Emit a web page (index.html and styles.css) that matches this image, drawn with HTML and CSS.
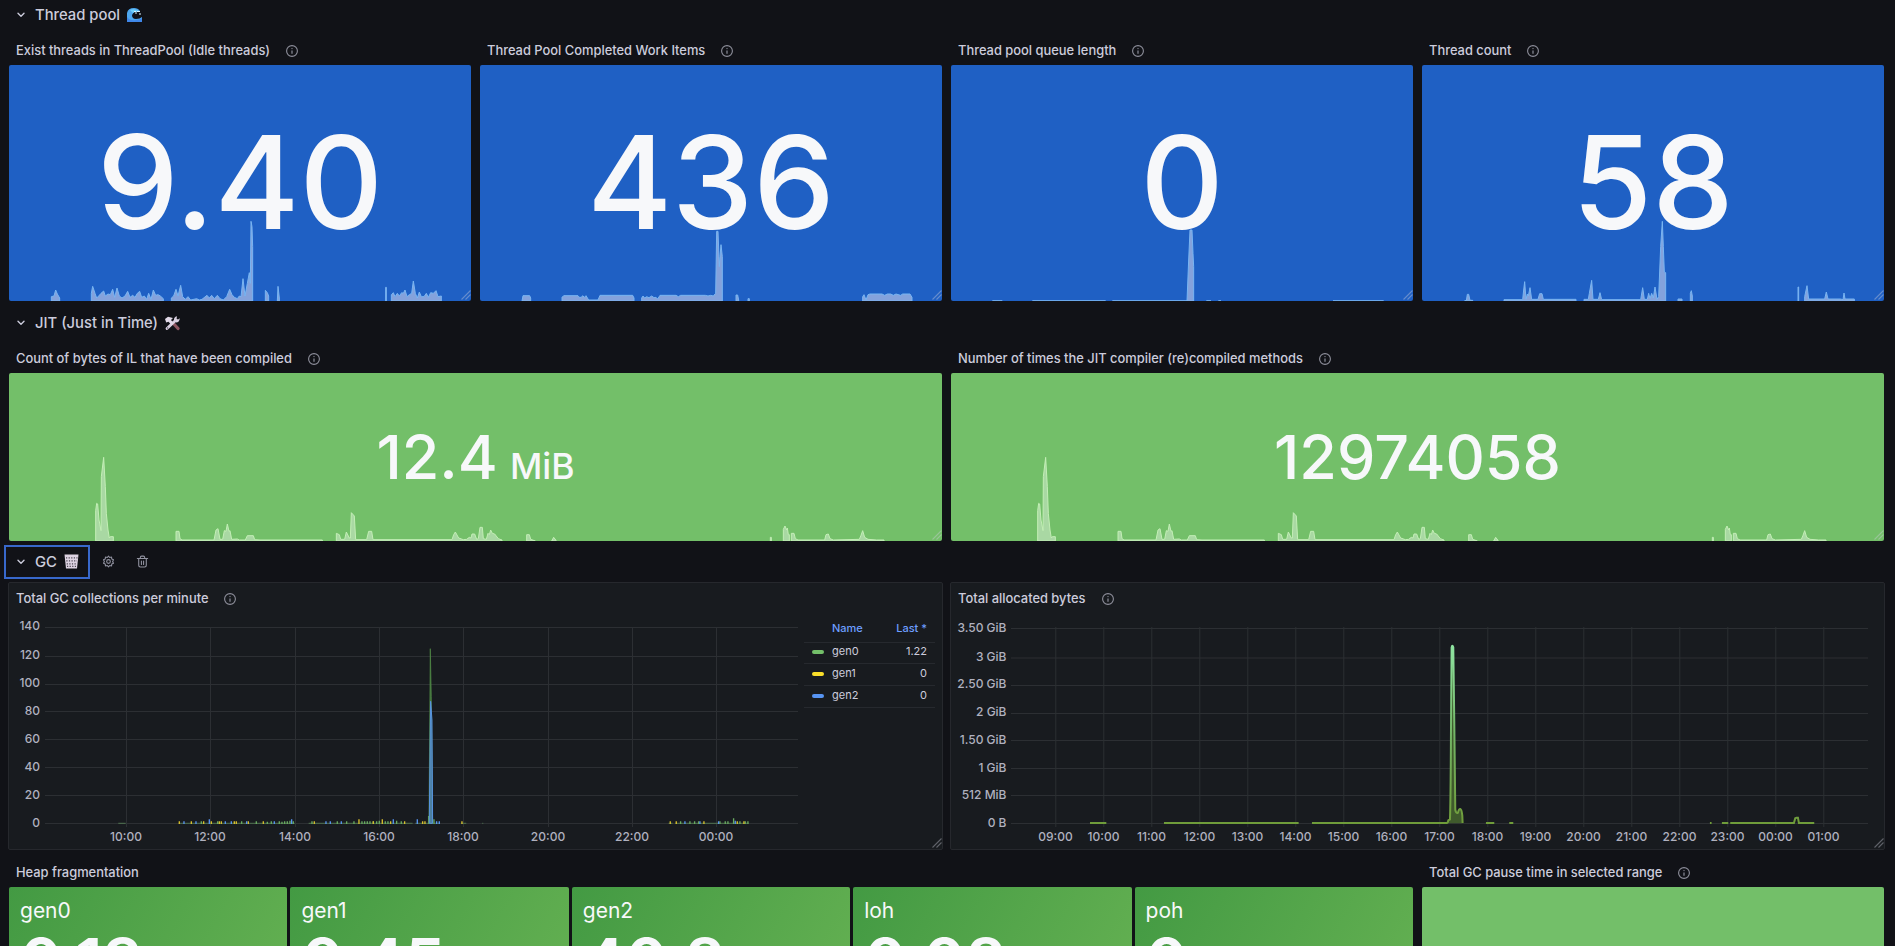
FILE: index.html
```html
<!DOCTYPE html>
<html lang="en">
<head>
    <meta charset="UTF-8">
    <meta name="viewport" content="width=device-width, initial-scale=1.0">
    <title>.NET runtime metrics</title>
    <link rel="stylesheet" href="styles.css">
</head>
<body>
    <!-- shared icons -->
    <svg class="defs" width="0" height="0">
        <symbol id="chevron" viewBox="0 0 8 6">
            <path d="M1 1.2 4 4.2 7 1.2" fill="none" stroke="currentColor" stroke-width="1.4" stroke-linecap="round" stroke-linejoin="round"/>
        </symbol>
        <symbol id="info" viewBox="0 0 12 12">
            <circle cx="6" cy="6" r="5.4" fill="none" stroke="currentColor" stroke-width="1.1"/>
            <path d="M6 5.4V8.7" stroke="currentColor" stroke-width="1.2"/>
            <circle cx="6" cy="3.6" r=".7" fill="currentColor"/>
        </symbol>
        <symbol id="resize" viewBox="0 0 10 10">
            <path d="M.5 9.5 9.5.5M4.5 9.5 9.5 4.5" stroke="currentColor" stroke-width="1.1"/>
        </symbol>
        <symbol id="jit-spark" viewBox="27 219 2799 504" preserveAspectRatio="none">
            <path d="M287 723V632L290 610 293 612 297 660 303 692 304 530 311 472 316 560 319 640 324 690 328 714 331 710 340 710V723Z
            M528 723V694H537L540 716 546 720H642L648 690 654 686 660 718H668L673 692 678 694 682 672 687 694 690 692 695 718 712 717 718 720H736L742 707H760L764 719 780 720H967V723Z
            M1009 723V700L1018 704 1022 718 1034 718 1039 696 1048 714 1051 714 1054 638 1063 648 1067 719H1100L1106 694H1115L1119 719H1356L1361 704 1366 696 1376 714 1390 719 1400 718 1408 712 1413 714 1416 702 1424 702 1430 718 1435 716 1440 682H1447L1450 716 1459 718 1464 700 1468 704 1472 690 1477 700 1484 702 1495 716 1506 720V723Z
            M1580 723V704H1588L1592 718 1606 723Z M1655 723 1661 712 1668 721V723Z M2311 723V712H2314V723Z
            M2350 723V688L2355 678 2360 690 2362 684 2365 704 2368 704V723Z M2374 723V700H2382L2386 716 2394 720H2474L2478 704 2485 702 2490 716 2500 720 2578 718 2583 706 2588 692 2594 712 2604 718 2630 720H2652V723Z"/>
        </symbol>
    </svg>

    <div class="dashboard">
        <div class="row-header">
            <div class="row-title">
                <svg class="chevron"><use href="#chevron"/></svg>
                <span>Thread pool</span>
                <svg class="emoji" viewBox="0 0 15 15">
                    <path d="M0 5Q1 0 7 0 11 0 13 3L10 4 7 4 5 7Q5 11 9 11 13 11 15 9V14H0Z" fill="#4ea7ee"/>
                    <path d="M0 9Q3 13 9 12 13 12 15 10V14H0Z" fill="#3f86e8"/>
                    <path d="M3 2Q7 0 12 3L8 4 6 5Z" fill="#6fd0fa"/>
                    <path d="M7 3.5H9M10 3.5H13M12 6H14M8 5H10" stroke="#d9f3ff" stroke-width="1.2"/>
                </svg>
            </div>
        </div>

        <div class="panels four">
            <div class="panel">
                <div class="panel-header">Exist threads in ThreadPool (Idle threads)<svg class="info"><use href="#info"/></svg></div>
                <div class="stat blue">
                    <svg class="spark" viewBox="27 195 1386 708" preserveAspectRatio="none">
                        <path d="M154 903V890L162 888 167 870 172 882 179 894V903Z
                        M274 903V880L278 859 285 880 290 894 296 888 303 880 311 873 316 888 324 882 331 884 338 868 344 892 351 864 358 888 366 894 375 888 383 874 390 892 398 886 405 892 412 880 419 874 425 892 433 888 440 898 446 880 453 898 460 870 467 886 474 884 481 888 490 896V903Z
                        M514 903V894L521 888 528 868 534 888 542 856 548 890 556 898 564 890 572 900 590 896 598 900 606 898 621 886 628 894 635 886 643 896 652 886 660 896 670 900 680 890 689 868 696 884 703 892 712 896 718 888 723 890 729 836 735 888 742 850 748 818 751 850 753 664 756 680 758 740V903Z
                        M796 903V871L802 878 806 888V903Z M832 903 834 859 838 894V903Z M1157 903V862H1159V903Z
                        M1174 903V884L1180 878 1185 890 1192 880 1198 888 1205 878 1210 880 1215 870 1221 890 1228 884 1235 880 1240 843 1246 880 1252 894 1258 876 1264 890 1272 890 1279 880 1285 892 1292 878 1300 880 1308 872 1314 890 1324 888V903Z"/>
                    </svg>
                    <span class="value">9.40</span>
                    <svg class="resize"><use href="#resize"/></svg>
                </div>
            </div>
            <div class="panel">
                <div class="panel-header">Thread Pool Completed Work Items<svg class="info"><use href="#info"/></svg></div>
                <div class="stat blue">
                    <svg class="spark" viewBox="30 195 1386 708" preserveAspectRatio="none">
                        <path d="M156 903 159 887H179L182 894V903Z
                        M276 903V892L281 887H324L328 892 334 892 338 887 343 892 348 887 356 900 384 900 390 886H488L492 894V903Z
                        M515 903V894L519 888 524 894 530 890 537 893 545 888 552 893 558 892 563 897 570 886H618L625 890 632 886H706L714 888 722 886 730 888 737 880 740 694 744 694 748 800 750 770 753 734 757 770V903Z
                        M798 903V885H803L806 900V903Z M834 903V896H838V903Z
                        M1178 903V890L1182 884 1188 900 1194 884 1200 882H1236L1244 886 1252 882 1262 882 1270 886 1278 882 1292 886 1298 882H1320L1326 892V903Z"/>
                    </svg>
                    <span class="value">436</span>
                    <svg class="resize"><use href="#resize"/></svg>
                </div>
            </div>
            <div class="panel">
                <div class="panel-header">Thread pool queue length<svg class="info"><use href="#info"/></svg></div>
                <div class="stat blue">
                    <svg class="spark" viewBox="32 195 1386 708" preserveAspectRatio="none">
                        <path d="M740 903 745 780 749 690H755L758 760 760 800V903Z"/>
                        <path d="M156 902H186M276 902H496M516 902H740M798 902H812M834 902H842M1178 902H1330"/>
                    </svg>
                    <span class="value">0</span>
                    <svg class="resize"><use href="#resize"/></svg>
                </div>
            </div>
            <div class="panel">
                <div class="panel-header">Thread count<svg class="info"><use href="#info"/></svg></div>
                <div class="stat blue">
                    <svg class="spark" viewBox="36 195 1386 708" preserveAspectRatio="none">
                        <path d="M164 902H169L172 883H176L180 901H188V903Z
                        M282 903V899H338L341 870 344 845 348 898 352 882 355 888 360 863 365 898 384 898 389 881H396L400 898H498V903Z
                        M522 903V898H535L538 880 545 841 549 898H565L570 878 575 899H692L698 863 703 898H712L716 880 720 896 725 880 730 894 735 861 741 898 746 890 752 740 757 664 760 740 763 816 767 818V903Z
                        M804 903V897H816V903Z M841 903V880L844 872 847 888V903Z M1164 903V861H1166V903Z
                        M1184 903V890L1191 857 1196 897H1244L1249 876 1254 897H1292L1299 899 1302 879 1305 897H1333V903Z"/>
                    </svg>
                    <span class="value">58</span>
                    <svg class="resize"><use href="#resize"/></svg>
                </div>
            </div>
        </div>

        <div class="row-header">
            <div class="row-title">
                <svg class="chevron"><use href="#chevron"/></svg>
                <span>JIT (Just in Time)</span>
                <svg class="emoji" viewBox="0 0 15 15">
                    <path d="M8 7 13 12.5" stroke="#8d5560" stroke-width="3.2" stroke-linecap="round"/>
                    <path d="M2 12.5 11 4" stroke="#d9cfe0" stroke-width="2.8" stroke-linecap="round"/>
                    <path d="M9 5Q8.5 .8 12 .3L11.5 3 13 3.5 14.8 2.3Q14.5 6.5 11 6.5Z" fill="#d9cfe0"/>
                    <path d="M0 3 3 .8 8 2 6 4 8.5 7 6.5 9 3.5 5.8 1.2 6.5Z" fill="#e2d9e8"/>
                    <circle cx="2.6" cy="12" r=".7" fill="#5b5363"/>
                </svg>
            </div>
        </div>

        <div class="panels two">
            <div class="panel">
                <div class="panel-header">Count of bytes of IL that have been compiled<svg class="info"><use href="#info"/></svg></div>
                <div class="stat green">
                    <svg class="spark"><use href="#jit-spark"/></svg>
                    <span class="value">12.4<span class="unit">MiB</span></span>
                    <svg class="resize"><use href="#resize"/></svg>
                </div>
            </div>
            <div class="panel">
                <div class="panel-header">Number of times the JIT compiler (re)compiled methods<svg class="info"><use href="#info"/></svg></div>
                <div class="stat green">
                    <svg class="spark"><use href="#jit-spark"/></svg>
                    <span class="value">12974058</span>
                    <svg class="resize"><use href="#resize"/></svg>
                </div>
            </div>
        </div>

        <div class="row-header gc">
            <div class="row-title focused">
                <svg class="chevron"><use href="#chevron"/></svg>
                <span>GC</span>
                <svg class="emoji" viewBox="0 0 15 15">
                    <path d="M.5 .5H14.5L13 14.5H2Z" fill="#ddd3e2"/>
                    <path d="M2 3.8H13.5M2.3 6.8H13M2.7 9.8H12.6M3 12.4H12" stroke="#4b4552" stroke-width="1.3" stroke-dasharray="1.2 1.4"/>
                </svg>
            </div>
            <svg class="action" viewBox="0 0 24 24">
                <path d="M12 2 14.2 4.6 17.6 3.8 18 7.2 21.2 8.6 19.6 12 21.2 15.4 18 16.8 17.6 20.2 14.2 19.4 12 22 9.8 19.4 6.4 20.2 6 16.8 2.8 15.4 4.4 12 2.8 8.6 6 7.2 6.4 3.8 9.8 4.6Z" fill="none" stroke="currentColor" stroke-width="2" stroke-linejoin="round"/>
                <circle cx="12" cy="12" r="3.4" fill="none" stroke="currentColor" stroke-width="2"/>
            </svg>
            <svg class="action" viewBox="0 0 24 24">
                <path d="M2.5 6.5H21.5M5 6.5V19Q5 22 8 22H16Q19 22 19 19V6.5M8 6V4.5Q8 2 10.5 2H13.5Q16 2 16 4.5V6M10 11V17.5M14 11V17.5" fill="none" stroke="currentColor" stroke-width="2" stroke-linecap="round"/>
            </svg>
        </div>

        <div class="panels two charts">
            <div class="panel solid">
                <div class="panel-header">Total GC collections per minute<svg class="info"><use href="#info"/></svg></div>
                <div class="chart-body">
                    <svg class="chart" width="795" height="234" viewBox="0 0 795 234">
                        <path class="grid" d="M36 12.5H789M36 41.5H789M36 69.5H789M36 96.5H789M36 124.5H789M36 152.5H789M36 180.5H789M36 208.5H789
                        M117.5 12V212M201.5 12V212M286.5 12V212M370.5 12V212M454.5 12V212M539.5 12V212M623.5 12V212M707.5 12V212"/>
                        <g class="axis y">
                            <text x="31" y="15">140</text>
                            <text x="31" y="44">120</text>
                            <text x="31" y="72">100</text>
                            <text x="31" y="99.5">80</text>
                            <text x="31" y="127.5">60</text>
                            <text x="31" y="155.5">40</text>
                            <text x="31" y="183.5">20</text>
                            <text x="31" y="211.5">0</text>
                        </g>
                        <g class="axis x">
                            <text x="117" y="225.5">10:00</text>
                            <text x="201" y="225.5">12:00</text>
                            <text x="286" y="225.5">14:00</text>
                            <text x="370" y="225.5">16:00</text>
                            <text x="454" y="225.5">18:00</text>
                            <text x="539" y="225.5">20:00</text>
                            <text x="623" y="225.5">22:00</text>
                            <text x="707" y="225.5">00:00</text>
                        </g>
                        <g transform="translate(-9 -45) scale(.3333)">
                            <path class="base" d="M355 760H377M536 760H884M926 760H1238M1246 760H1320M1384 760H1399M1447 760H1450M2006 760H2018M2026 760H2246"/>
                            <path class="tick green-line" d="M604 762V754M653 762V754M725 762V754M769 762V754M802 762V755M814 762V754M838 762V754M846 762V755M854 762V754M862 762V754M870 762V752M880 762V754M936 762V754M1012 762V754M1040 762V754M1062 762V754M1086 762V754M1094 762V754M1102 762V754M1110 762V754M1120 762V754M1130 762V754M1138 762V752M1156 762V754M1164 762V754M1190 762V752M1204 762V754M1286 762V738M1302 762V748M2042 762V754M2070 762V754M2084 762V754M2096 762V754M2160 762V754M2176 762V754M2184 762V754M2201 762V745M2220 762V754M2236 762V754M2244 762V754"/>
                            <path class="tick yellow-line" d="M538 762V754M574 762V754M611 762V754M634 762V754M658 762V754M664 762V754M703 762V754M709 762V754M745 762V754M790 762V754M943 762V754M1077 762V748M1120 762V754M1147 762V748M1172 762V754M1214 762V754M1268 762V754M1275 762V754M1294 762V750M1386 762V754M2011 762V754M2029 762V754M2112 762V754M2212 762V754M2232 762V754"/>
                            <path class="tick blue-line" d="M552 762V754M588 762V754M628 762V748M676 762V754M694 762V754M740 762V754M823 762V754M875 762V748M978 762V754M991 762V754M1024 762V754M1180 762V748M1252 762V748M1310 762V754M1318 762V754M2055 762V754M2100 762V754M2156 762V754M2206 762V752"/>
                            <path class="gen0" d="M1287 760 1291 236 1294 380 1298 760Z"/>
                            <path class="gen2" d="M1288 760 1292 394 1296 450 1298 760Z"/>
                        </g>
                    </svg>
                    <table class="legend">
                        <tr><th></th><th>Name</th><th class="num">Last *</th></tr>
                        <tr><td><i class="swatch sw-green"></i></td><td>gen0</td><td class="num">1.22</td></tr>
                        <tr><td><i class="swatch sw-yellow"></i></td><td>gen1</td><td class="num">0</td></tr>
                        <tr><td><i class="swatch sw-blue"></i></td><td>gen2</td><td class="num">0</td></tr>
                    </table>
                </div>
                <svg class="resize"><use href="#resize"/></svg>
            </div>
            <div class="panel solid">
                <div class="panel-header">Total allocated bytes<svg class="info"><use href="#info"/></svg></div>
                <div class="chart-body">
                    <svg class="chart" width="925" height="234" viewBox="0 0 925 234">
                        <defs>
                            <linearGradient id="alloc" gradientUnits="userSpaceOnUse" x1="0" y1="226" x2="0" y2="760">
                                <stop offset="0" stop-color="#8ee3a0"/>
                                <stop offset=".5" stop-color="#73b466"/>
                                <stop offset="1" stop-color="#6f9c3a"/>
                            </linearGradient>
                        </defs>
                        <path class="grid" d="M60 13.5H917M60 43H917M60 70.5H917M60 98.5H917M60 125.5H917M60 153.5H917M60 180.5H917M60 208.5H917
                        M104.8 12V212M152.8 12V212M200.8 12V212M248.8 12V212M296.8 12V212M344.8 12V212M392.8 12V212M440.8 12V212M488.8 12V212M536.8 12V212M584.8 12V212M632.8 12V212M680.8 12V212M728.8 12V212M776.8 12V212M824.8 12V212M872.8 12V212"/>
                        <g class="axis y">
                            <text x="55.5" y="17">3.50 GiB</text>
                            <text x="55.5" y="46">3 GiB</text>
                            <text x="55.5" y="73">2.50 GiB</text>
                            <text x="55.5" y="101">2 GiB</text>
                            <text x="55.5" y="128.5">1.50 GiB</text>
                            <text x="55.5" y="156.5">1 GiB</text>
                            <text x="55.5" y="183.5">512 MiB</text>
                            <text x="55.5" y="211.5">0 B</text>
                        </g>
                        <g class="axis x">
                            <text x="104.5" y="225.5">09:00</text>
                            <text x="152.5" y="225.5">10:00</text>
                            <text x="200.5" y="225.5">11:00</text>
                            <text x="248.5" y="225.5">12:00</text>
                            <text x="296.5" y="225.5">13:00</text>
                            <text x="344.5" y="225.5">14:00</text>
                            <text x="392.5" y="225.5">15:00</text>
                            <text x="440.5" y="225.5">16:00</text>
                            <text x="488.5" y="225.5">17:00</text>
                            <text x="536.5" y="225.5">18:00</text>
                            <text x="584.5" y="225.5">19:00</text>
                            <text x="632.5" y="225.5">20:00</text>
                            <text x="680.5" y="225.5">21:00</text>
                            <text x="728.5" y="225.5">22:00</text>
                            <text x="776.5" y="225.5">23:00</text>
                            <text x="824.5" y="225.5">00:00</text>
                            <text x="872.5" y="225.5">01:00</text>
                        </g>
                        <g transform="translate(-11 -45) scale(.3333)">
                            <path class="alloc-fill" d="M1522 760 1530 750 1533 560 1535 230H1540L1543 460 1546 700 1550 726 1556 728 1560 716 1564 724 1568 740V760Z"/>
                            <path class="alloc-line" d="M450 759H499M672 759H1076M1116 759H1520Q1524 759 1525 751L1530 748Q1532 700 1533 500L1535 232Q1537 222 1540 232L1543 460 1546 720Q1549 732 1554 728 1557 716 1561 717 1565 718 1567 736L1568 759M1638 759H1663M1708 759H1720M2310 759H2315M2346 759H2365M2371 759H2562L2566 745 2570 743H2574L2577 759H2623"/>
                        </g>
                    </svg>
                </div>
                <svg class="resize"><use href="#resize"/></svg>
            </div>
        </div>

        <div class="panels bottom">
            <div class="panel wide">
                <div class="panel-header">Heap fragmentation</div>
                <div class="heaps">
                    <div class="heap"><span class="heap-name">gen0</span><span class="heap-value">0.13</span></div>
                    <div class="heap"><span class="heap-name">gen1</span><span class="heap-value">0.45</span></div>
                    <div class="heap"><span class="heap-name">gen2</span><span class="heap-value">40.8</span></div>
                    <div class="heap"><span class="heap-name">loh</span><span class="heap-value">0.08</span></div>
                    <div class="heap"><span class="heap-name">poh</span><span class="heap-value">0</span></div>
                </div>
            </div>
            <div class="panel">
                <div class="panel-header">Total GC pause time in selected range<svg class="info"><use href="#info"/></svg></div>
                <div class="stat green"></div>
            </div>
        </div>
    </div>
</body>
</html>
```
FILE: styles.css
```css
* {
    box-sizing: border-box;
}

body {
    margin: 0;
    background-color: #111217;
    color: #ccccdc;
    font-family: Inter, "Liberation Sans", sans-serif;
    font-size: 13px;
}

.defs {
    position: absolute;
}

.dashboard {
    width: 1885px;
    height: 946px;
    padding-left: 8px;
    overflow: hidden;
}

/* row headers */
.row-header {
    display: flex;
    align-items: center;
    height: 39px;
    padding-bottom: 3px;
    padding-top: 6px;
}

.row-header:first-child {
    height: 33px;
    padding-top: 0;
}

.row-header.gc {
    height: 40px;
    padding: 0 0 1px;
}

.row-title {
    display: flex;
    align-items: center;
    height: 30px;
    padding-left: 9px;
    font-size: 14.8px;
    font-weight: 500;
}

.row-title.focused {
    height: 34px;
    width: 86px;
    margin-left: -4px;
    padding-left: 11px;
    border: 2px solid #3868cb;
}

.chevron {
    width: 8px;
    height: 6px;
    margin-right: 10px;
}

.emoji {
    width: 15px;
    height: 15px;
    margin-left: 7px;
}

.action {
    width: 13px;
    height: 13px;
    margin-left: 12px;
    color: #9192a0;
}

.action + .action {
    margin-left: 21px;
}

/* panels */
.panels {
    display: grid;
    gap: 7px;
}

.four {
    grid-template-columns: repeat(4, 1fr);
    height: 269px;
}

.two {
    grid-template-columns: repeat(2, 1fr);
    height: 201px;
}

.charts {
    height: 268px;
    margin-bottom: 5px;
}

.bottom {
    grid-template-columns: repeat(4, 1fr);
    height: 269px;
}

.wide {
    grid-column: span 3;
}

.panel {
    display: flex;
    flex-direction: column;
    position: relative;
    padding: 0 1px 1px;
    min-width: 0;
}

.panel.solid {
    padding: 0;
    background-color: #181b1f;
    border: 1px solid #26282d;
    border-radius: 2px;
}

.panel-header {
    display: flex;
    align-items: center;
    height: 32px;
    padding: 2px 0 0 7px;
    font-size: 12.9px;
    font-weight: 500;
    white-space: nowrap;
}

.solid .panel-header {
    padding-top: 0;
    padding-bottom: 2px;
}

.info {
    width: 12px;
    height: 12px;
    margin: 2px 0 0 16px;
    color: #8e8f9b;
}

.resize {
    position: absolute;
    right: 0;
    bottom: 1px;
    width: 10px;
    height: 10px;
    color: rgba(204, 204, 220, 0.4);
}

/* stat panels */
.stat {
    flex: 1;
    display: flex;
    align-items: center;
    justify-content: center;
    position: relative;
    border-radius: 2px;
    overflow: hidden;
    color: #f7f8fa;
    font-weight: 500;
}

.blue {
    background-color: #1f60c4;
    font-size: 129.5px;
}

.green {
    background-color: #73bf69;
    font-size: 61px;
}

.value {
    position: relative;
    line-height: 1;
}

.unit {
    margin-left: 12px;
    font-size: 35.5px;
}

.spark {
    position: absolute;
    left: 0;
    top: 0;
    width: 100%;
    height: 100%;
    stroke-width: 3;
}

.blue .spark {
    fill: #84a2dc;
    stroke: #79b5f2;
}

.green .spark {
    fill: #a9d8a3;
    stroke: #c3eeb6;
}

/* time series */
.chart-body {
    display: flex;
    align-items: flex-start;
}

.grid {
    fill: none;
    stroke: #2c2f33;
}

.axis text {
    fill: #b0b1bf;
    font-size: 12px;
    font-weight: 500;
}

.axis.y text {
    text-anchor: end;
}

.axis.x text {
    text-anchor: middle;
}

.base {
    stroke: #4f7350;
    stroke-width: 3;
}

.tick {
    stroke-width: 4;
}

.green-line {
    stroke: #68aa60;
}

.yellow-line {
    stroke: #d9bf2c;
}

.blue-line {
    stroke: #5794f2;
}

.gen0 {
    fill: #3e6b3b;
    stroke: #549148;
    stroke-width: 2;
}

.gen2 {
    fill: #4c7f9f;
    stroke: #5794e0;
    stroke-width: 3;
}

.alloc-fill {
    fill: #3f5a2c;
}

.alloc-line {
    fill: none;
    stroke: url(#alloc);
    stroke-width: 6;
}

.legend {
    width: 131px;
    margin-top: 1px;
    border-collapse: collapse;
    font-size: 11px;
}

.legend tr {
    height: 21.7px;
    border-bottom: 1px solid #26292e;
}

.legend tr:first-child {
    height: 26px;
}

.legend th {
    padding: 0 0 2px;
    color: #6e9fff;
    font-weight: 500;
    text-align: left;
}

.legend td {
    padding: 0 0 3px;
}

.legend th:first-child,
.legend td:first-child {
    width: 28px;
    padding-left: 8px;
}

.legend .num {
    padding-right: 8px;
    text-align: right;
}

.swatch {
    display: block;
    width: 12px;
    height: 4px;
    margin-top: 2px;
    border-radius: 2px;
}

.sw-green {
    background-color: #73bf69;
}

.sw-yellow {
    background-color: #fade2a;
}

.sw-blue {
    background-color: #5794f2;
}

/* heap fragmentation */
.heaps {
    flex: 1;
    display: grid;
    grid-template-columns: repeat(5, 1fr);
    gap: 3px;
}

.heap {
    display: flex;
    flex-direction: column;
    padding: 11px 11px;
    border-radius: 2px;
    background: linear-gradient(120deg, #439a43, #6bb555);
    color: #f7f8fa;
}

.heap-name {
    font-size: 21px;
    line-height: 26px;
}

.heap-value {
    font-size: 64px;
    font-weight: 600;
    line-height: 76px;
}
```
